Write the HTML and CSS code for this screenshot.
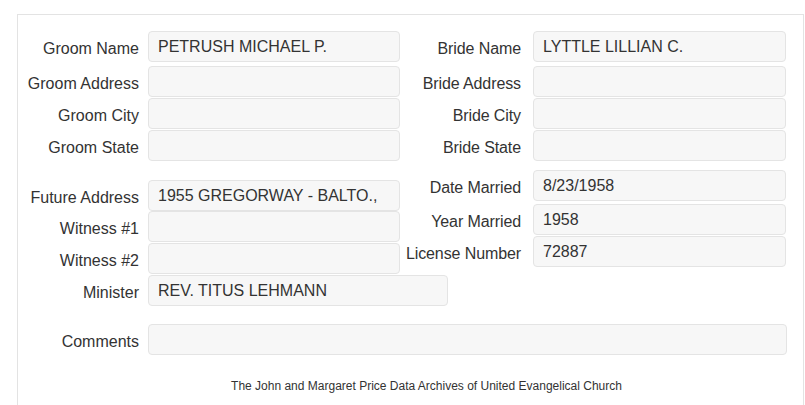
FILE: index.html
```html
<!DOCTYPE html>
<html>
<head>
<meta charset="utf-8">
<title>Marriage Record</title>
<link rel="stylesheet" href="styles.css">
</head>
<body>
  <div class="panel">

    <div class="couple">
      <div class="row first">
        <label class="lbl">Groom Name</label><div class="field">PETRUSH MICHAEL P.</div>
        <label class="lbl lbl-r">Bride Name</label><div class="field">LYTTLE LILLIAN C.</div>
      </div>
      <div class="row">
        <label class="lbl">Groom Address</label><div class="field"></div>
        <label class="lbl lbl-r">Bride Address</label><div class="field"></div>
      </div>
      <div class="row">
        <label class="lbl">Groom City</label><div class="field"></div>
        <label class="lbl lbl-r">Bride City</label><div class="field"></div>
      </div>
      <div class="row">
        <label class="lbl">Groom State</label><div class="field"></div>
        <label class="lbl lbl-r">Bride State</label><div class="field"></div>
      </div>
    </div>

    <div class="split">
      <div class="col col-left">
        <div class="row first">
          <label class="lbl">Future Address</label><div class="field">1955 GREGORWAY - BALTO.,</div>
        </div>
        <div class="row">
          <label class="lbl">Witness #1</label><div class="field"></div>
        </div>
        <div class="row">
          <label class="lbl">Witness #2</label><div class="field"></div>
        </div>
        <div class="row">
          <label class="lbl">Minister</label><div class="field wide">REV. TITUS LEHMANN</div>
        </div>
      </div>
      <div class="col col-right">
        <div class="row first">
          <label class="lbl lbl-r">Date Married</label><div class="field">8/23/1958</div>
        </div>
        <div class="row">
          <label class="lbl lbl-r">Year Married</label><div class="field">1958</div>
        </div>
        <div class="row">
          <label class="lbl lbl-r">License Number</label><div class="field">72887</div>
        </div>
      </div>
    </div>

    <div class="row comments">
      <label class="lbl">Comments</label><div class="field"></div>
    </div>

    <p class="footer">The John and Margaret Price Data Archives of United Evangelical Church</p>
  </div>
</body>
</html>
```

FILE: styles.css
```css
html { background:#fff; }

body
{
  margin:14px 1px 0 17px;
  font-family:"Liberation Sans", Arial, sans-serif;
  color:#333;
}

.panel
{
  border:1px solid #e3e3e3;
  border-bottom:none;
  padding:16px 16px 40px 0;
  height:400px;
  box-sizing:border-box;
}

.row
{
  display:grid;
  grid-template-columns:130px 252px 133px 253px;
  align-items:center;
  margin-bottom:1px;
}
.couple .row.first { margin-bottom:4px; }

.lbl
{
  font-size:16px;
  text-align:right;
  padding:5px 9px 0 0;
  white-space:nowrap;
}
.lbl-r { padding-right:12px; letter-spacing:-0.1px; }

.field
{
  height:31px;
  box-sizing:border-box;
  background:#f7f7f7;
  border:1px solid #e4e4e4;
  border-radius:4px;
  padding:0 9px;
  font-size:16px;
  line-height:29px;
  color:#333;
  white-space:nowrap;
  overflow:hidden;
}
.field.wide { width:300px; }

/* second block: two independent columns */
.split { display:flex; margin-top:9px; }
.col-left { padding-top:10px; }
.col-left .row { grid-template-columns:130px 252px; }
.col-left .row.first { margin-bottom:0; }
.col-right .row { grid-template-columns:133px 253px; }
.col-right .row.first { margin-bottom:3px; }

.comments
{
  grid-template-columns:130px 1fr;
  margin-top:17px;
}

.footer
{
  margin:24px 0 0;
  padding-left:48px;
  text-align:center;
  font-size:12px;
}
```
